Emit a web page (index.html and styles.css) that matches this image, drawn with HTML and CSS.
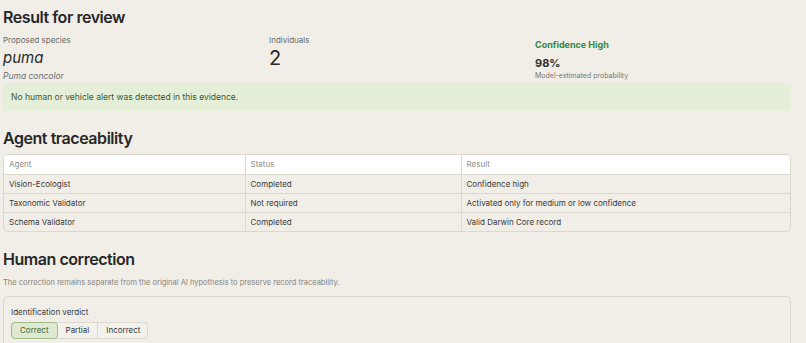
FILE: index.html
```html
<!DOCTYPE html>
<html>
<head>
<meta charset="utf-8">
<link rel="stylesheet" href="styles.css">
</head>
<body>
<main class="page">
  <h2 class="title">Result for review</h2>
  <div class="summary">
    <div class="cell">
      <div class="label">Proposed species</div>
      <div class="species">puma</div>
      <div class="sci">Puma concolor</div>
    </div>
    <div class="cell">
      <div class="label">Individuals</div>
      <div class="count">2</div>
    </div>
    <div class="cell conf">
      <div class="conf-title">Confidence High</div>
      <div class="pct">98%</div>
      <div class="note">Model-estimated probability</div>
    </div>
  </div>
  <div class="alert">No human or vehicle alert was detected in this evidence.</div>

  <h2 class="title t2">Agent traceability</h2>
  <div class="table-wrap">
    <table class="agents">
      <thead>
        <tr><th class="c1">Agent</th><th class="c2">Status</th><th>Result</th></tr>
      </thead>
      <tbody>
        <tr><td>Vision-Ecologist</td><td>Completed</td><td>Confidence high</td></tr>
        <tr><td>Taxonomic Validator</td><td>Not required</td><td>Activated only for medium or low confidence</td></tr>
        <tr><td>Schema Validator</td><td>Completed</td><td>Valid Darwin Core record</td></tr>
      </tbody>
    </table>
  </div>

  <h2 class="title t3">Human correction</h2>
  <p class="desc">The correction remains separate from the original AI hypothesis to preserve record traceability.</p>
  <div class="card">
    <div class="field-label">Identification verdict</div>
    <div class="seg">
      <button class="seg-btn active">Correct</button>
      <button class="seg-btn">Partial</button>
      <button class="seg-btn">Incorrect</button>
    </div>
  </div>
</main>
</body>
</html>
```
FILE: styles.css
```css
html, body {
  margin: 0;
  padding: 0;
  background: #f1eee8;
  font-family: Inter, "Liberation Sans", sans-serif;
  color: #2b2b2b;
  overflow: hidden;
}
.page {
  width: 788px;
  margin-left: 3px;
  padding-top: 6px;
}
.title {
  margin: 0;
  font-size: 16px;
  font-weight: 600;
  line-height: 22px;
  color: #272727;
  letter-spacing: -0.45px;
}
.summary {
  display: grid;
  grid-template-columns: 256px 256px 256px;
  column-gap: 10px;
  margin-top: 7px;
}
.label {
  font-size: 8px;
  line-height: 10px;
  color: #6a6a66;
}
.species {
  font-size: 15px;
  font-style: italic;
  line-height: 18px;
  margin-top: 4px;
  color: #2a2a2a;
}
.sci {
  font-size: 8.5px;
  font-style: italic;
  color: #6f6f6a;
  line-height: 11px;
  margin-top: 4px;
}
.count {
  font-size: 20px;
  line-height: 22px;
  margin-top: 2px;
  color: #2a2a2a;
}
.conf {
  padding-top: 4px;
}
.conf-title {
  font-size: 9px;
  font-weight: 700;
  color: #2f8a45;
  line-height: 12px;
}
.pct {
  font-size: 11px;
  font-weight: 700;
  line-height: 14px;
  margin-top: 5px;
  color: #2e2e2e;
}
.note {
  font-size: 7px;
  color: #77776f;
  line-height: 9px;
  margin-top: 1px;
}
.alert {
  margin-top: 1px;
  background: #e4eed8;
  border-radius: 2px;
  padding: 9px 8px;
  font-size: 8.5px;
  line-height: 10px;
  color: #3b5a2e;
}
.t2 {
  margin-top: 16px;
}
.table-wrap {
  margin-top: 5px;
  border: 1px solid #dcd8d0;
  border-radius: 5px;
  overflow: hidden;
}
.agents {
  width: 100%;
  border-collapse: collapse;
  font-size: 8px;
}
.agents th, .agents td {
  text-align: left;
  padding: 0 5px;
  height: 19px;
  box-sizing: border-box;
  border-right: 1px solid #dcd8d0;
  border-bottom: 1px solid #dcd8d0;
}
.agents th:last-child, .agents td:last-child {
  border-right: none;
}
.agents tbody tr:last-child td {
  border-bottom: none;
}
.agents th {
  background: #ffffff;
  font-weight: 400;
  color: #8b8b86;
}
.agents td {
  color: #3a3a3a;
}
.agents .c1 { width: 241px; }
.agents .c2 { width: 216px; }
.t3 {
  margin-top: 16px;
}
.desc {
  margin: 8px 0 0;
  font-size: 7.5px;
  line-height: 10px;
  color: #85847e;
}
.card {
  margin-top: 8px;
  border: 1px solid #dcd8d0;
  border-bottom: none;
  border-radius: 5px 5px 0 0;
  padding: 10px 7px 20px;
  height: 60px;
}
.field-label {
  font-size: 8px;
  line-height: 10px;
  color: #3a3a3a;
}
.seg {
  display: inline-flex;
  margin-top: 2px;
  border: 1px solid #dcd8d0;
  border-radius: 4px;
  background: #f3f1ec;
}
.seg-btn {
  font-family: inherit;
  font-size: 8px;
  color: #3a3a3a;
  background: transparent;
  border: none;
  border-right: 1px solid #dcd8d0;
  height: 15px;
  padding: 0 8px;
  margin: 0;
}
.seg-btn:last-child {
  border-right: none;
  padding-right: 7px;
}
.seg-btn.active {
  background: #dfe8d3;
  color: #3c6a2c;
  border: 1px solid #9fbc8a;
  border-radius: 4px;
  margin: -1px 0 -1px -1px;
  height: 17px;
  padding: 0 8px;
}
```
